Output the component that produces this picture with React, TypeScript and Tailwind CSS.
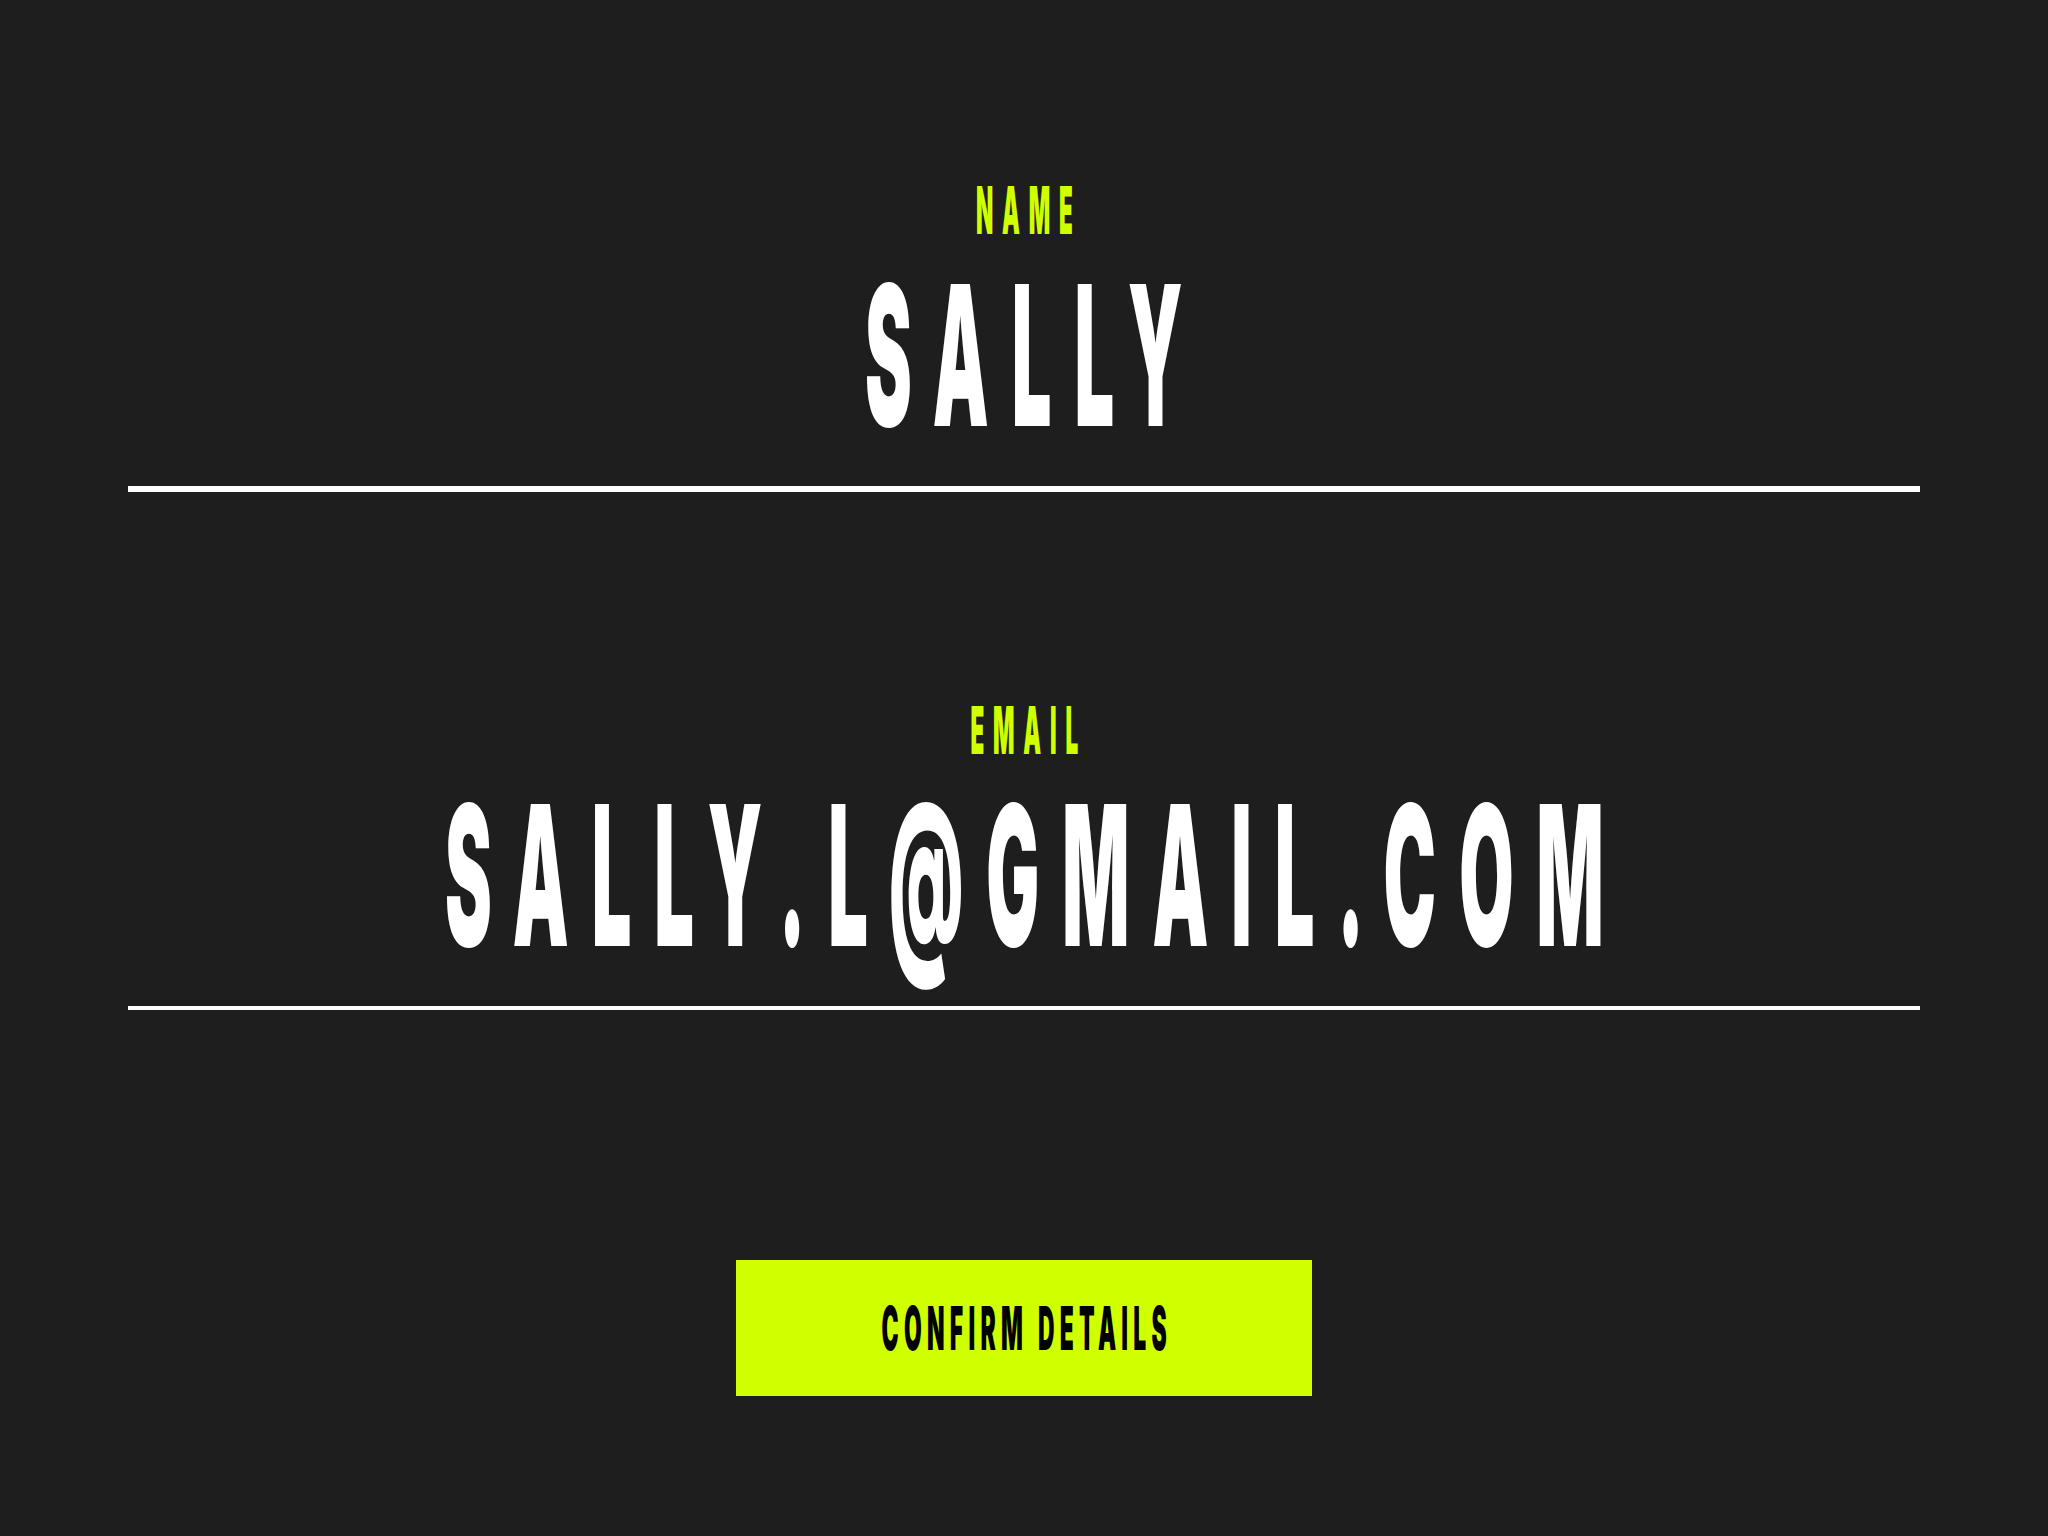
import React from "react";

const fields = [
  { label: "Name", value: "Sally", rule: "h-[6px]", gap: "mt-0" },
  { label: "Email", value: "sally.l@gmail.com", rule: "h-[4px]", gap: "mt-[205px]" },
];

const App = () => {
  return (
    <div
      className="flex min-h-screen flex-col items-center overflow-hidden bg-[#1e1e1e] px-[128px] pt-[177px] font-black uppercase"
      style={{ fontFamily: "Inter, 'Liberation Sans', sans-serif" }}>
      {fields.map((field) => (
        <section key={field.label} className={`flex w-full flex-col items-center ${field.gap}`}>
          <span className="inline-block origin-center scale-x-[0.34] whitespace-nowrap pl-[26px] text-[66px] leading-none tracking-[26px] text-[#d0ff00]">
            {field.label}
          </span>
          <span className="mt-[15px] inline-block origin-center scale-x-[0.36] whitespace-nowrap pl-[64px] text-[195px] leading-none tracking-[64px] text-white">
            {field.value}
          </span>
          <div className={`mt-[33px] w-full bg-white ${field.rule}`} />
        </section>
      ))}
      <button className="mt-[250px] flex h-[136px] w-[576px] items-center justify-center bg-[#d0ff00]">
        <span className="inline-block origin-center scale-x-[0.38] whitespace-nowrap pl-[14px] text-[60px] uppercase leading-none tracking-[14px] text-black">
          Confirm Details
        </span>
      </button>
    </div>
  );
};

export default App;
